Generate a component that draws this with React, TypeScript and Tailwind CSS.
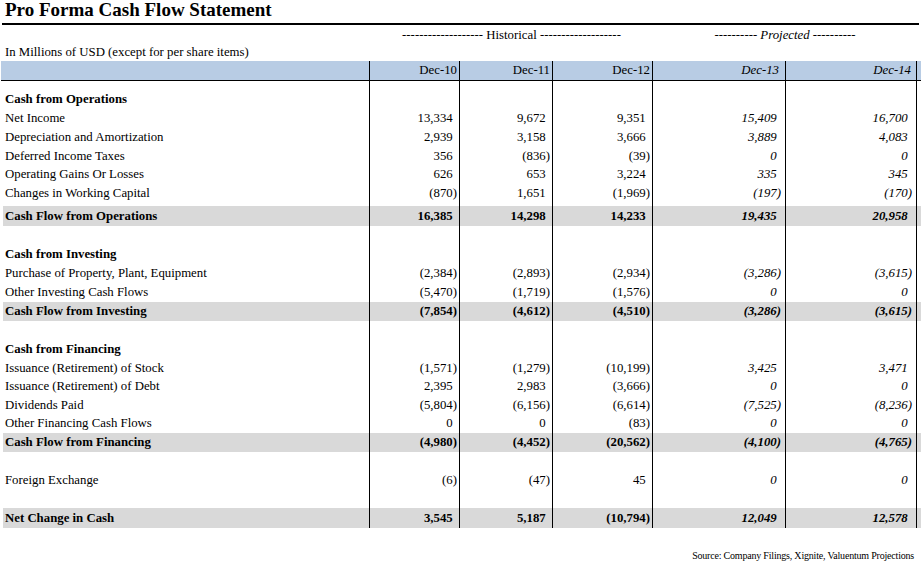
import React from "react";

type Row =
  | { kind: "blank"; h: number }
  | { kind: "section"; label: string; h: number }
  | { kind: "item" | "total"; label: string; v: string[]; h: number };

const rows: Row[] = [
  { kind: "blank", h: 9 },
  { kind: "section", label: "Cash from Operations", h: 19 },
  { kind: "item", label: "Net Income", v: ["13,334", "9,672", "9,351", "15,409", "16,700"], h: 19 },
  { kind: "item", label: "Depreciation and Amortization", v: ["2,939", "3,158", "3,666", "3,889", "4,083"], h: 19 },
  { kind: "item", label: "Deferred Income Taxes", v: ["356", "(836)", "(39)", "0", "0"], h: 18 },
  { kind: "item", label: "Operating Gains Or Losses", v: ["626", "653", "3,224", "335", "345"], h: 19 },
  { kind: "item", label: "Changes in Working Capital", v: ["(870)", "1,651", "(1,969)", "(197)", "(170)"], h: 19 },
  { kind: "blank", h: 3 },
  { kind: "total", label: "Cash Flow from Operations", v: ["16,385", "14,298", "14,233", "19,435", "20,958"], h: 20 },
  { kind: "blank", h: 19 },
  { kind: "section", label: "Cash from Investing", h: 19 },
  { kind: "item", label: "Purchase of Property, Plant, Equipment", v: ["(2,384)", "(2,893)", "(2,934)", "(3,286)", "(3,615)"], h: 19 },
  { kind: "item", label: "Other Investing Cash Flows", v: ["(5,470)", "(1,719)", "(1,576)", "0", "0"], h: 19 },
  { kind: "total", label: "Cash Flow from Investing", v: ["(7,854)", "(4,612)", "(4,510)", "(3,286)", "(3,615)"], h: 19 },
  { kind: "blank", h: 19 },
  { kind: "section", label: "Cash from Financing", h: 19 },
  { kind: "item", label: "Issuance (Retirement) of Stock", v: ["(1,571)", "(1,279)", "(10,199)", "3,425", "3,471"], h: 18 },
  { kind: "item", label: "Issuance (Retirement) of Debt", v: ["2,395", "2,983", "(3,666)", "0", "0"], h: 19 },
  { kind: "item", label: "Dividends Paid", v: ["(5,804)", "(6,156)", "(6,614)", "(7,525)", "(8,236)"], h: 18 },
  { kind: "item", label: "Other Financing Cash Flows", v: ["0", "0", "(83)", "0", "0"], h: 19 },
  { kind: "total", label: "Cash Flow from Financing", v: ["(4,980)", "(4,452)", "(20,562)", "(4,100)", "(4,765)"], h: 19 },
  { kind: "blank", h: 19 },
  { kind: "item", label: "Foreign Exchange", v: ["(6)", "(47)", "45", "0", "0"], h: 19 },
  { kind: "blank", h: 18 },
  { kind: "total", label: "Net Change in Cash", v: ["3,545", "5,187", "(10,794)", "12,049", "12,578"], h: 20 },
];

const cols = "grid grid-cols-[367px_90px_93px_100px_133px_131px]";
const numPad = ["pr-[2px]", "pr-[2px]", "pr-[2px]", "pr-[4px]", "pr-[4px]"];

function Num({ value }: { value: string }) {
  const neg = value.startsWith("(");
  return (
    <span>
      {value}
      {!neg && <span className="invisible">)</span>}
    </span>
  );
}

function BodyRow({ row }: { row: Row }) {
  const gray = row.kind === "total";
  return (
    <div
      className={`${cols} ${gray ? "bg-[#d9d9d9] font-bold" : ""}`}
      style={{ height: row.h, lineHeight: `${row.h}px` }}
    >
      <div className={`border-r border-black pl-[2px] whitespace-nowrap ${row.kind === "section" ? "font-bold" : ""}`}>
        {"label" in row ? row.label : ""}
      </div>
      {[0, 1, 2, 3, 4].map((i) => (
        <div
          key={i}
          className={`border-r border-black text-right whitespace-nowrap ${numPad[i]} ${i > 2 ? "italic" : ""}`}
        >
          {"v" in row ? <Num value={row.v[i]} /> : null}
        </div>
      ))}
    </div>
  );
}

export default function App() {
  return (
    <div className="w-[921px] h-[567px] overflow-hidden bg-white text-black font-['Liberation_Serif',serif] text-[12.8px]">
      <div className="h-[25px] mx-[2px] border-b-2 border-black">
        <h1 className="pl-[3px] text-[19px] font-bold leading-[19px]">Pro Forma Cash Flow Statement</h1>
      </div>

      <div className={`${cols} ml-[3px] h-[19px] leading-[20px]`}>
        <div />
        <div className="col-span-3 text-center whitespace-nowrap">
          ------------------- Historical -------------------
        </div>
        <div className="col-span-2 text-center italic whitespace-nowrap">
          ---------- Projected ----------
        </div>
      </div>

      <div className="h-[17px] pl-[5px] leading-[17px]">In Millions of USD (except for per share items)</div>

      <div className="ml-[1px] grid grid-cols-[369px_90px_93px_100px_133px_131px] h-[20px] bg-[#b8cce4] border-b border-black leading-[19px]">
        <div className="border-r border-black" />
        <div className="border-r border-black text-right pr-[2px]">Dec-10</div>
        <div className="border-r border-black text-right pr-[2px]">Dec-11</div>
        <div className="border-r border-black text-right pr-[2px]">Dec-12</div>
        <div className="border-r border-black text-right pr-[6px] italic">Dec-13</div>
        <div className="border-r border-black text-right pr-[5px] italic">Dec-14</div>
      </div>

      <div className="ml-[3px]">
        {rows.map((r, i) => (
          <BodyRow key={i} row={r} />
        ))}
      </div>

      <div className="mt-[21px] pr-[7px] text-right text-[10px] leading-[14px] tracking-[-0.2px]">
        Source: Company Filings, Xignite, Valuentum Projections
      </div>
    </div>
  );
}
